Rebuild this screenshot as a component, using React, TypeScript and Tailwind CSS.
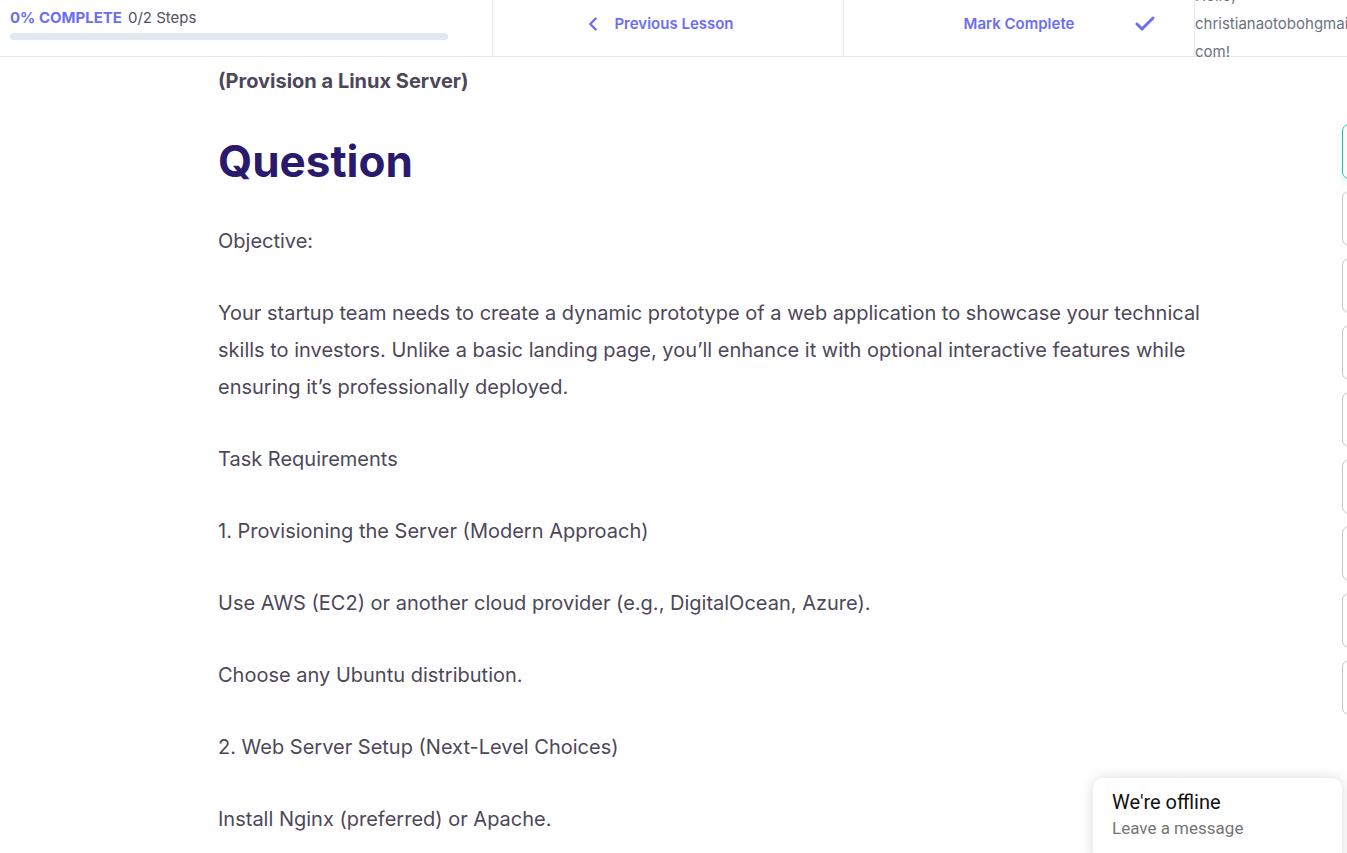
import { Check, ChevronLeft } from 'lucide-react';

const paragraphs = [
  'Objective:',
  'Your startup team needs to create a dynamic prototype of a web application to showcase your technical skills to investors. Unlike a basic landing page, you\u2019ll enhance it with optional interactive features while ensuring it\u2019s professionally deployed.',
  'Task Requirements',
  '1. Provisioning the Server (Modern Approach)',
  'Use AWS (EC2) or another cloud provider (e.g., DigitalOcean, Azure).',
  'Choose any Ubuntu distribution.',
  '2. Web Server Setup (Next-Level Choices)',
  'Install Nginx (preferred) or Apache.',
];

const sideTabs = [0, 1, 2, 3, 4, 5, 6, 7, 8];

export default function App() {
  return (
    <div className="relative h-[853px] w-full overflow-hidden bg-white font-['Inter',sans-serif]">
      {/* top bar */}
      <header className="flex h-[57px] border-b border-[#e5e7eb]">
        <div className="w-[493px] shrink-0 border-r border-[#e5e7eb] px-[10px] pt-[9px]">
          <div className="flex items-center gap-[6px] text-[15px] leading-[18px]">
            <span className="font-bold text-[#6b6ef2]">0% COMPLETE</span>
            <span className="text-[#55505f]">0/2 Steps</span>
          </div>
          <div className="mt-[6px] h-[7px] w-[438px] rounded-full bg-[#e2e8f0]" />
        </div>

        <div className="flex w-[351px] shrink-0 items-start justify-center gap-[10px] border-r border-[#e5e7eb] pr-[20px] pt-[14px] text-[15px] font-semibold leading-[20px] text-[#6b6ef2]">
          <ChevronLeft size={22} strokeWidth={2.6} className="-mt-[1px]" />
          <span>Previous Lesson</span>
        </div>

        <div className="relative flex w-[351px] shrink-0 items-start justify-center border-r border-[#e5e7eb] pt-[14px] text-[15px] font-semibold leading-[20px] text-[#6b6ef2]">
          <span>Mark Complete</span>
          <Check size={24} strokeWidth={3} className="absolute right-[37px] top-[12px]" />
        </div>

        <div className="-mt-[18px] flex-1 whitespace-nowrap text-[15px] leading-[28px] text-[#6b7280]">
          <div>Hello,</div>
          <div>christianaotobohgmail.</div>
          <div>com!</div>
        </div>
      </header>

      {/* lesson content */}
      <main className="w-[1010px] pl-[218px] text-[#4d4759]">
        <p className="mt-[10px] text-[20px] font-bold leading-[28px]">(Provision a Linux Server)</p>
        <h1 className="mt-[38px] text-[44px] font-bold leading-[56px] text-[#2a1a6e]">Question</h1>
        <div className="mt-[34px] w-[1000px]">
          {paragraphs.map((text) => (
            <p key={text} className="mb-[35px] text-[20px] leading-[37px]">
              {text}
            </p>
          ))}
        </div>
      </main>

      {/* right side tabs */}
      <div className="absolute left-[1342px] top-[124px] flex flex-col gap-[12px]">
        {sideTabs.map((i) => (
          <div
            key={i}
            className={
              i === 0
                ? 'h-[55px] w-[40px] rounded-[7px] border border-[#1fbfa5] bg-white shadow-[0_6px_8px_rgba(31,191,165,0.12)]'
                : 'h-[55px] w-[40px] rounded-[7px] border border-[#c4c4c4] bg-white'
            }
          />
        ))}
      </div>

      {/* chat widget */}
      <div className="absolute left-[1093px] top-[778px] h-[90px] w-[249px] rounded-[10px] bg-white pl-[19px] pt-[11px] font-['Roboto',sans-serif] shadow-[0_0_14px_rgba(0,0,0,0.14)]">
        <div className="text-[20px] leading-[26px] text-[#111111]">We're offline</div>
        <div className="mt-[2px] text-[17px] leading-[22px] text-[#757575]">Leave a message</div>
      </div>
    </div>
  );
}
